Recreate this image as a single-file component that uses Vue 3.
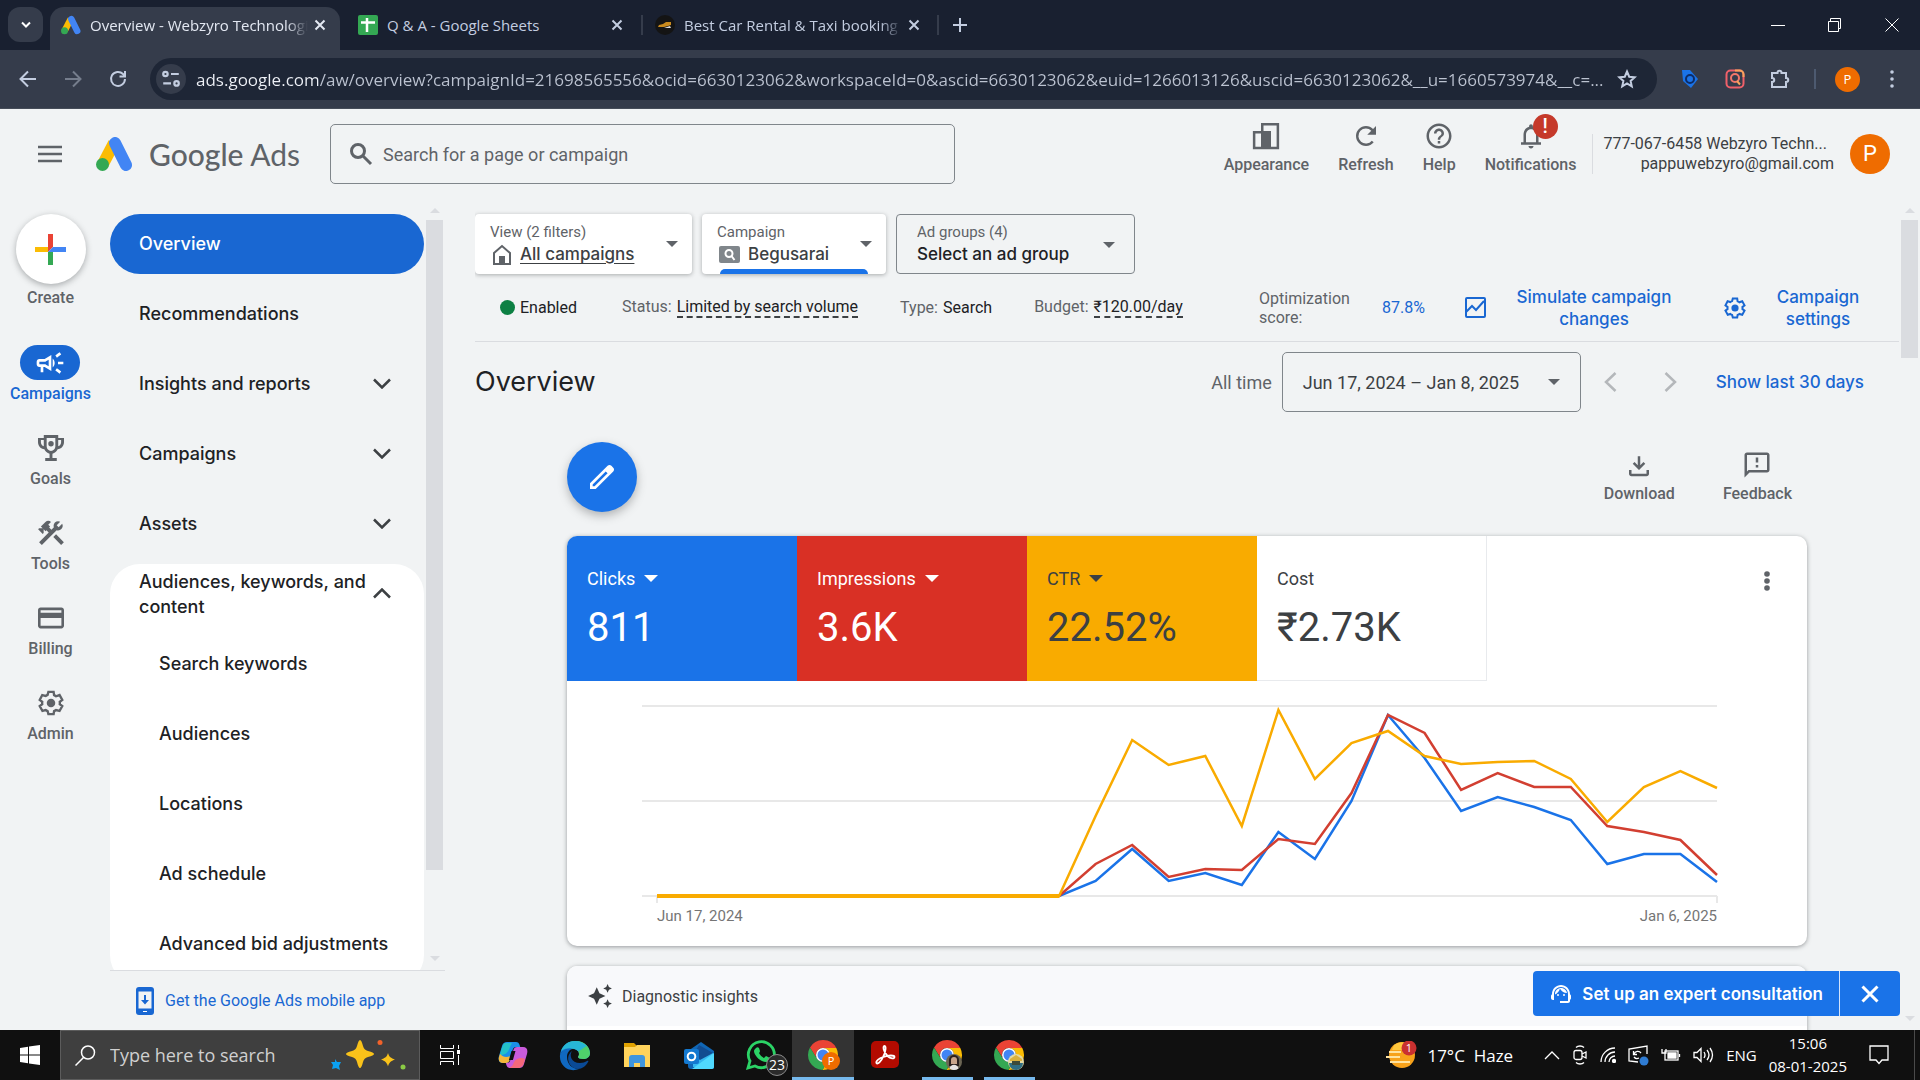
<script setup>
import { ref, computed } from 'vue'

const url = ref('ads.google.com/aw/overview?campaignId=21698565556&ocid=6630123062&workspaceId=0&ascid=6630123062&euid=1266013126&uscid=6630123062&__u=1660573974&__c=...')
const campaign = ref('Begusarai')
const adGroup = ref('Select an ad group')

const gear = '<path fill="none" stroke="currentColor" stroke-width="2" d="M19.43 12.98c.04-.32.07-.64.07-.98 0-.34-.03-.66-.07-.98l2.11-1.65-2.3-4.1-2.94 1.03c-.52-.4-1.08-.73-1.69-.98L14.2 2.6H9.8l-.67 2.47c-.61.25-1.17.59-1.69.98L4.6 5.27l-2.14 4.1 2.11 1.65c-.04.32-.07.65-.07.98 0 .33.03.66.07.98l-2.11 1.65 2.3 4.1 2.68-.78c.52.4 1.08.73 1.69.98l.67 2.47h4.4l.41-2.47c.61-.25 1.17-.59 1.69-.98l2.94.78 2.3-4.1z"/><circle cx="12" cy="12" r="3.6"/>'

const railItems = [
    { label: 'Goals', box: '3 3 18 18', icon: '<path d="M19 5h-2V3H7v2H3v3c0 2.55 1.92 4.63 4.39 4.94.63 1.5 1.98 2.63 3.61 2.96V19H8v2h8v-2h-3v-3.1c1.63-.33 2.98-1.46 3.61-2.96C19.08 12.63 21 10.55 21 8V5h-2zM5 8V6.500h2v4.320C5.840 10.400 5 9.300 5 8zm7 6c-1.650 0-3-1.350-3-3V5h6v6c0 1.650-1.350 3-3 3zm7-6c0 1.300-.84 2.400-2 2.820V6.500h2V8z"/><circle cx="12" cy="9" r="1.900"/>' },
    { label: 'Tools', box: '2 2 20 20', icon: '<path d="M13.78 15.17l2.12-2.12 6 6-2.12 2.12zM17.5 10c1.93 0 3.5-1.57 3.5-3.5 0-.58-.16-1.12-.41-1.6l-2.7 2.7-1.49-1.49 2.7-2.7c-.48-.25-1.02-.41-1.6-.41C15.57 3 14 4.57 14 6.5c0 .41.08.8.21 1.16l-1.85 1.85-1.78-1.78.71-.71-1.41-1.41L12 3.49c-1.17-1.17-3.07-1.17-4.24 0L4.22 7.03l1.41 1.41H2.81l-.71.71 3.54 3.54.71-.71V9.15l1.41 1.41.71-.71 1.78 1.78-7.41 7.41 2.12 2.12L16.34 9.79c.36.13.75.21 1.16.21z"/>' },
    { label: 'Billing', box: '2 2 20 20', icon: '<path d="M20 4H4c-1.11 0-1.99.89-1.99 2L2 18c0 1.11.89 2 2 2h16c1.11 0 2-.89 2-2V6c0-1.11-.89-2-2-2zm0 14H4v-6h16v6zm0-10H4V6h16v2z"/>' },
    { label: 'Admin', box: '1 1 22 22', icon: gear }
]

const navItems = [
    { label: 'Overview', active: true },
    { label: 'Recommendations' },
    { label: 'Insights and reports', expandable: true },
    { label: 'Campaigns', expandable: true },
    { label: 'Assets', expandable: true }
]
const navChildren = ['Search keywords', 'Audiences', 'Locations', 'Ad schedule', 'Advanced bid adjustments']

const headerActions = [
    { label: 'Appearance', icon: '<path fill-rule="evenodd" d="M8 1.500h14.500v21h-21V8H8zM10 3.500h10.500v17H16V8h-6zM3.500 10v10.500H8V10z"/>' },
    { label: 'Refresh', icon: '<path d="M17.65 6.35C16.2 4.9 14.21 4 12 4c-4.42 0-7.99 3.58-7.99 8s3.570 8 7.990 8c2.500 0 4.700-1.150 6.150-2.930l-1.500-1.350A6 6 0 1 1 16.220 7.780L13 11h7V4l-2.350 2.350z"/>' },
    { label: 'Help', icon: '<path d="M11 18h2v-2h-2v2zm1-16C6.48 2 2 6.48 2 12s4.480 10 10 10 10-4.480 10-10S17.520 2 12 2zm0 18c-4.410 0-8-3.590-8-8s3.590-8 8-8 8 3.590 8 8-3.590 8-8 8zm0-14c-2.210 0-4 1.790-4 4h2c0-1.100.9-2 2-2s2 .9 2 2c0 2-3 1.750-3 5h2c0-2.250 3-2.500 3-5 0-2.210-1.790-4-4-4z"/>' },
    { label: 'Notifications', badge: '!', icon: '<path d="M12 22c1.100 0 2-.9 2-2h-4c0 1.100.9 2 2 2zm6-5v-6c0-3.070-1.630-5.640-4.500-6.320V4c0-.83-.67-1.500-1.500-1.500s-1.500.67-1.500 1.500v.68C7.640 5.360 6 7.920 6 11v6H4v2h16v-2h-2zm-2 0H8v-6c0-2.480 1.510-4.500 4-4.500s4 2.020 4 4.500v6z"/>' }
]

const scorecards = [
    { label: 'Clicks', value: '811', theme: 'blue', menu: true },
    { label: 'Impressions', value: '3.6K', theme: 'red', menu: true },
    { label: 'CTR', value: '22.52%', theme: 'yellow', menu: true },
    { label: 'Cost', value: '₹2.73K', theme: 'plain' }
]

// weekly values in chart units, the first 12 weeks had no traffic
const quiet = Array(12).fill(215)
const series = [
    { name: 'Clicks', color: '#1a73e8', y: [...quiet, 200, 168, 200, 192, 204, 151, 178, 120, 34, 77, 130, 116, 126, 139, 183, 173, 173, 201] },
    { name: 'Impressions', color: '#d23f31', y: [...quiet, 183, 164, 196, 188, 189, 158, 163, 112, 34, 52, 109, 92, 106, 106, 145, 151, 159, 194] },
    { name: 'CTR', color: '#f9ab00', y: [...quiet, 135, 59, 84, 75, 145, 29, 98, 62, 50, 75, 83, 81, 80, 98, 141, 106, 90, 107] }
]
const lines = computed(() => series.map(s => ({
    ...s,
    points: s.y.map((y, i) => `${(90 + i * 1060 / 29).toFixed(1)},${y}`).join(' ')
})))

const chrome = '<path fill="#ea4335" d="M16 9H29.300A15 15 0 0 0 3 8.500L9.900 19.500A7 7 0 0 1 16 9Z"/><path fill="#fbbc04" d="M29.300 9H16A7 7 0 0 1 22 19.500L15.500 31A15 15 0 0 0 29.300 9Z"/><path fill="#34a853" d="M3 8.500L9.900 19.500A7 7 0 0 0 22 19.500L15.500 31A15 15 0 0 1 3 8.500Z"/><circle cx="16" cy="16" r="7" fill="#fff"/><circle cx="16" cy="16" r="5.500" fill="#4285f4"/>'

const apps = [
    { name: 'Copilot', icon: '<path fill="#1b8fe8" d="M10 3h9c2 0 3 1 3.600 3l.6 2h-4c-2 0-3 1-3.600 3l-3 10c-.6 2-1.600 3-3.600 3H6c-4 0-5-3-4-7L5 7c1-3 2.500-4 5-4z"/><path fill="#23c0c8" d="M8 4c-2 1-3 4-4 8l-1 4c4 0 8-1 10-8l2-4z"/><path fill="#f5b63a" d="M3 15l-1 3c-1 4 1 6 4 6h3c2 0 3-1 3.600-3l1-4C9 19 6 18 3 15z"/><path fill="#c95bdb" d="M22 29h-9c-2 0-3-1-3.600-3l-.6-2h1c2 0 3-1 3.600-3l3-10c.6-2 1.600-3 3.600-3h6c4 0 5 3 4 7l-3 10c-1 3-2.500 4-5 4z"/><path fill="#f4687a" d="M24 28c2-1 3-4 4-8-3-2-9-1-11 3-1 3-2 5-5 6h10z"/><path fill="#101010" d="M14.500 12h4l-2.600 9h-4z"/>' },
    { name: 'Edge', icon: '<path fill="#1478d4" d="M1 16C2 8 8 2 16 2c9 0 15 6 15 12 0 4-3 6-7 6-3 0-5-1-5-2 0-1 1-1 1-3 0-3-3-5-7-5-7 0-11 3-12 6z"/><path fill="#4fd06b" d="M11 3c12-4 20 4 20 11 0 4-3 6-7 6-3 0-5-1-5-2 0-1 1-1 1-3 0-5-5-6-12-6-2 0-3 0-4 1 1-3 4-6 7-7z"/><path fill="#27b6d6" d="M2 12C4 6 9 2 16 2c5 0 9 2 12 5-5 2-6 5-9 5-3-3-11-4-17 0z"/><path fill="#1068c0" d="M1 16c1-4 6-7 12-6-3 1-5 4-5 8 0 7 5 12 12 12-10 4-20-3-19-14z"/><path fill="#0a4a96" d="M13 12c-3 4-1 12 8 12 3 0 5-1 7-2 1-.5 2 0 1 1-2 4-6 7-10 7C9 29 6 17 13 12z"/>' },
    { name: 'File Explorer', icon: '<path fill="#e0a100" d="M3 4h10l3 3v6H3z"/><path fill="#ffd35c" d="M3 8h11l2-2h13v22H3z"/><path fill="#3f95dd" d="M8 19c0-2 1-3 3-3h10c2 0 3 1 3 3v9h-5v-4h-6v4H8z"/>' },
    { name: 'Outlook', icon: '<path fill="#1066b5" d="M5 12L18 3l13 9v16c0 1-1 2-2 2H8c-2 0-3-1-3-3z"/><path fill="#35b8f1" d="M10 14h20v14H10z"/><path fill="#124c91" d="M16 6l14 8-13 7-7-5z"/><path fill="#50d9ff" d="M31 14v14c0 1-1 2-2 2H9z"/><rect x="1" y="10" width="15" height="15" rx="2" fill="#1479d0"/><circle cx="8.500" cy="17.500" r="3.800" fill="none" stroke="#fff" stroke-width="2"/>' },
    { name: 'WhatsApp', count: 23, icon: '<path fill="none" stroke="#2bd366" stroke-width="2.800" d="M3 29l2-7A13 13 0 1 1 10 27z"/><path fill="#2bd366" d="M11 9c1-1 2-1 3 0l1 3c0 1-1 2-1 2 1 2 3 4 5 5l2-2 4 2c0 2-1 4-4 4-6 0-12-7-12-11 0-1 1-2 2-3z"/>' },
    { name: 'Chrome', state: 'active', profile: 'P', icon: chrome },
    { name: 'Acrobat', icon: '<rect x="2" y="2" width="28" height="27" rx="5" fill="#b30b00"/><path fill="none" stroke="#fff" stroke-width="1.800" d="M15.500 7c-2 0-1 6 3 10 3 3 7 3 7 1s-6-2-11 0c-4 1-8 4-7 6s5-2 7-7c2-4 3-10 1-10z"/>' },
    { name: 'Chrome profile 2', state: 'open', icon: chrome + '<circle cx="23" cy="23" r="8" fill="#6c6654"/><path fill="#2b211e" d="M18 27v-6a5 5 0 0 1 10 0v6z"/><path fill="#c9a58b" d="M20 21a3 3 0 0 1 6 0v4h-6z"/><path fill="#e8e4e2" d="M18.500 29.500c1-5 8-5 9 0a8 8 0 0 1-9 0z"/>' },
    { name: 'Chrome profile 3', state: 'open', icon: chrome + '<circle cx="23" cy="23" r="8" fill="#e4d9a2"/><path fill="#2f6d83" d="M16 24h14a7 7 0 0 1-14 0z"/><path fill="#dbb13c" d="M17 20l6-4 6 4v2H17z"/><path fill="#3d4a3a" d="M19 22h8v4h-8z"/>' }
]
</script>

<template>
    <div class="desktop">
        <div class="tabs">
            <button class="tab_search" aria-label="Search tabs">
                <svg width="12" height="8" viewBox="0 0 12 8"><path d="M2 1.500l4 4 4-4" fill="none" stroke="currentColor" stroke-width="2" /></svg>
            </button>
            <div class="tab tab_active">
                <svg class="fav" viewBox="0 0 37 34"><path d="M18 6L7 27" stroke="#fbbc04" stroke-width="12" /><circle cx="6.500" cy="27.500" r="6.500" fill="#34a853" /><path d="M19 6l11 22" stroke="#4285f4" stroke-width="12" stroke-linecap="round" /></svg>
                <span class="tab_title tab_fade">Overview - Webzyro Technologi</span>
                <button class="tab_close" aria-label="Close tab"><svg viewBox="0 0 12 12"><path d="M1.500 1.500l9 9M10.500 1.500l-9 9" /></svg></button>
            </div>
            <div class="tab">
                <svg class="fav" viewBox="0 0 20 20"><rect width="20" height="20" rx="2" fill="#34a853" /><path d="M3 7.500h14M9 3v14" stroke="#fff" stroke-width="2.500" /></svg>
                <span class="tab_title">Q &amp; A - Google Sheets</span>
                <button class="tab_close" aria-label="Close tab"><svg viewBox="0 0 12 12"><path d="M1.500 1.500l9 9M10.500 1.500l-9 9" /></svg></button>
            </div>
            <div class="tab tab_split">
                <svg class="fav" viewBox="0 0 20 20"><circle cx="10" cy="10" r="10" fill="#141414" /><path d="M3 12l1-2 4-1 3-2h5v3l-3 1-4 1z" fill="#c98a1e" /><path d="M9 13l6-2 1 2z" fill="#ddd" /></svg>
                <span class="tab_title tab_fade">Best Car Rental &amp; Taxi booking</span>
                <button class="tab_close" aria-label="Close tab"><svg viewBox="0 0 12 12"><path d="M1.500 1.500l9 9M10.500 1.500l-9 9" /></svg></button>
            </div>
            <button class="new_tab" aria-label="New tab"><svg width="14" height="14" viewBox="0 0 14 14"><path d="M7 0v14M0 7h14" stroke="currentColor" stroke-width="2" /></svg></button>
            <div class="window_controls">
                <button aria-label="Minimize"><svg width="14" height="14" viewBox="0 0 14 14"><path d="M0 7.500h14" /></svg></button>
                <button aria-label="Restore"><svg width="14" height="14" viewBox="0 0 14 14"><path d="M.5 3.500h10v10h-10zM2.500 3.500v-3h10v10h-2" /></svg></button>
                <button aria-label="Close"><svg width="14" height="14" viewBox="0 0 14 14"><path d="M.5.5l13 13M13.500.5l-13 13" /></svg></button>
            </div>
        </div>

        <div class="toolbar">
            <button aria-label="Back"><svg viewBox="0 0 20 20"><path d="M18 10H3M10 2.500L2.500 10l7.500 7.500" /></svg></button>
            <button aria-label="Forward" disabled><svg viewBox="0 0 20 20"><path d="M2 10h15M10 2.500l7.500 7.500-7.500 7.500" /></svg></button>
            <button aria-label="Reload"><svg viewBox="0 0 20 20"><path d="M17 10a7 7 0 1 1-2-5l2 2M17 2v5.500h-5.500" /></svg></button>
            <div class="omnibox">
                <button class="tune" aria-label="Site information"><svg viewBox="0 0 18 18"><circle cx="4" cy="4.500" r="2" /><path d="M9 4.500h7M2 13h7" /><circle cx="14" cy="13" r="2" /></svg></button>
                <input v-model="url" type="text" aria-label="Address bar">
                <button class="star" aria-label="Bookmark"><svg viewBox="0 0 20 20"><path d="M10 2.500l2.200 5.200 5.600.5-4.200 3.700 1.200 5.500L10 14.500l-4.800 2.900 1.200-5.500-4.200-3.700 5.600-.5z" /></svg></button>
            </div>
            <div class="extensions">
                <svg viewBox="0 0 20 20"><path d="M2 1l8 0 8 9-7 9-8-7z" fill="#1a73e8" stroke="none" /><circle cx="10" cy="10" r="4" stroke="#0d2c66" /></svg>
                <svg viewBox="0 0 20 20"><rect x="1.500" y="1.500" width="17" height="17" rx="4" stroke="#f0606a" /><path d="M18.500 8V5.500a4 4 0 0 0-4-4H10" stroke="#f9a45c" /><circle cx="10" cy="9" r="4" stroke="#f2776a" /><path d="M12 12l3 3.500" stroke="#f9a45c" /></svg>
                <svg viewBox="0 0 20 20"><path d="M2 4h5.500c0-3 4-3 4 0H16v5c3 0 3 4 0 4v5H2v-5c3 0 3-4 0-4z" /></svg>
                <span class="bar"></span>
                <button class="profile" aria-label="Profile">P</button>
                <button aria-label="Menu"><svg viewBox="0 0 20 20"><g fill="currentColor" stroke="none"><circle cx="10" cy="3" r="1.800" /><circle cx="10" cy="10" r="1.800" /><circle cx="10" cy="17" r="1.800" /></g></svg></button>
            </div>
        </div>

        <header class="ads_header">
            <button class="hamburger" aria-label="Main menu"><svg width="24" height="18" viewBox="0 0 24 18"><path d="M0 2h24M0 9h24M0 16h24" stroke="currentColor" stroke-width="2.500" /></svg></button>
            <a class="logo" href="#">
                <svg width="37" height="34" viewBox="0 0 37 34"><path d="M18 6L7 27" stroke="#fbbc04" stroke-width="12" /><circle cx="6.500" cy="27.500" r="6.500" fill="#34a853" /><path d="M19 6l11 22" stroke="#4285f4" stroke-width="12" stroke-linecap="round" /></svg>
                <span><b>Google</b> Ads</span>
            </a>
            <label class="search">
                <svg width="24" height="24" viewBox="0 0 24 24"><circle cx="9" cy="9" r="6.500" /><path d="M14 14l8 8" /></svg>
                <input type="search" placeholder="Search for a page or campaign" aria-label="Search for a page or campaign">
            </label>
            <div class="header_actions">
                <button v-for="a in headerActions" :key="a.label" class="icon_button">
                    <svg width="30" height="30" viewBox="0 0 24 24" v-html="a.icon"></svg>
                    <span>{{ a.label }}</span>
                    <span v-if="a.badge" class="badge">{{ a.badge }}</span>
                </button>
            </div>
            <div class="account">
                <div>
                    <p class="account_name">777-067-6458 Webzyro Techn...</p>
                    <p>pappuwebzyro@gmail.com</p>
                </div>
                <button class="avatar" aria-label="Google account">P</button>
            </div>
        </header>

        <div class="workspace">
            <nav class="rail">
                <button class="create">
                    <span class="create_circle"><svg width="31" height="31" viewBox="0 0 31 31"><path fill="#ea4335" d="M13 0h5v13l-5 5z" /><path fill="#fbbc04" d="M0 13h13v5H0z" /><path fill="#4285f4" d="M18 13h13v5H13z" /><path fill="#34a853" d="M13 18h5v13h-5z" /></svg></span>
                    Create
                </button>
                <a href="#" class="rail_item rail_active">
                    <span class="rail_icon"><svg width="32" height="32" viewBox="0 0 24 24"><path d="M18 11v2h4v-2h-4zM16 17.610c.96.71 2.210 1.650 3.200 2.390.4-.53.8-1.070 1.200-1.600-.99-.74-2.240-1.680-3.200-2.400-.4.54-.8 1.080-1.200 1.610zM20.400 5.600c-.4-.53-.8-1.070-1.200-1.600-.99.74-2.240 1.680-3.200 2.400.4.53.8 1.070 1.200 1.600.96-.72 2.210-1.650 3.200-2.400zM4 9c-1.100 0-2 .9-2 2v2c0 1.100.9 2 2 2h1v4h2v-4h1l5 3V6L8 9H4zm5.030 1.710L11 9.530v4.940l-1.970-1.180-.48-.29H4v-2h4.550l.48-.29zM15.500 12c0-1.330-.58-2.530-1.500-3.350v6.690c.92-.81 1.500-2.010 1.500-3.340z" /></svg></span>
                    Campaigns
                </a>
                <a v-for="item in railItems" :key="item.label" href="#" class="rail_item">
                    <span class="rail_icon"><svg width="26" height="26" :viewBox="item.box" v-html="item.icon"></svg></span>
                    {{ item.label }}
                </a>
            </nav>

            <div class="side">
                <div class="side_scroll">
                    <nav class="menu">
                        <a v-for="item in navItems" :key="item.label" href="#" class="menu_item" :class="{ menu_active: item.active }">
                            {{ item.label }}
                            <svg v-if="item.expandable" width="18" height="11" viewBox="0 0 18 11"><path d="M1 1.500l8 8 8-8" /></svg>
                        </a>
                        <div class="menu_group">
                            <a href="#" class="menu_item">
                                Audiences, keywords, and content
                                <svg width="18" height="11" viewBox="0 0 18 11"><path d="M1 9.500l8-8 8 8" /></svg>
                            </a>
                            <a v-for="child in navChildren" :key="child" href="#" class="menu_item menu_child">{{ child }}</a>
                        </div>
                    </nav>
                    <div class="scrollbar" aria-hidden="true"><i class="up"></i><b></b><i class="down"></i></div>
                </div>
                <a href="#" class="mobile_app">
                    <svg width="18" height="28" viewBox="0 0 18 28"><rect width="18" height="28" rx="3" fill="#1967d2" /><path d="M2.500 4.500h13v17h-13z" fill="#f1f3f4" /><path d="M8 8h2v5h3l-4 4.500L5 13h3z" fill="#1967d2" /><path d="M7 24.500h4" stroke="#fff" /></svg>
                    Get the Google Ads mobile app
                </a>
            </div>

            <main class="main">
                <div class="content">
                    <div class="pickers">
                        <button class="picker picker_view">
                            <span class="picker_label">View (2 filters)</span>
                            <span class="picker_value">
                                <svg width="20" height="21" viewBox="0 0 20 21"><path d="M2 9l8-7 8 7v11H2z" fill="none" stroke="#5f6368" stroke-width="2" /><path d="M7 12h6v8H7z" fill="#5f6368" /></svg>
                                <u>All campaigns</u>
                            </span>
                            <i class="caret"></i>
                        </button>
                        <label class="picker picker_campaign">
                            <span class="picker_label">Campaign</span>
                            <span class="picker_value">
                                <svg width="21" height="17" viewBox="0 0 21 17"><rect width="21" height="17" rx="2" fill="#80868b" /><circle cx="10" cy="7.500" r="3.500" fill="none" stroke="#fff" stroke-width="2" /><path d="M12.500 10l3 4" stroke="#fff" stroke-width="2" /></svg>
                                <select v-model="campaign"><option>Begusarai</option></select>
                            </span>
                            <i class="caret"></i>
                        </label>
                        <label class="picker picker_group">
                            <span class="picker_label">Ad groups (4)</span>
                            <span class="picker_value"><select v-model="adGroup"><option>Select an ad group</option></select></span>
                            <i class="caret"></i>
                        </label>
                    </div>

                    <div class="status">
                        <span class="enabled">Enabled</span>
                        <span class="pair"><em>Status:</em><span class="dashed">Limited by search volume</span></span>
                        <span class="pair"><em>Type:</em>Search</span>
                        <span class="pair"><em>Budget:</em><span class="dashed">₹120.00/day</span></span>
                        <div class="status_right">
                            <em class="score">Optimization score:</em>
                            <a href="#">87.8%</a>
                            <button class="text_link simulate">
                                <svg width="21" height="21" viewBox="0 0 21 21"><rect x="1" y="1" width="19" height="19" rx="1" fill="none" stroke="currentColor" stroke-width="2" /><path d="M1 15l6-6 4 4 8-9" fill="none" stroke="currentColor" stroke-width="2" /></svg>
                                <span>Simulate campaign changes</span>
                            </button>
                            <button class="text_link settings">
                                <svg width="22" height="22" viewBox="1 1 22 22" v-html="gear"></svg>
                                <span>Campaign settings</span>
                            </button>
                        </div>
                    </div>

                    <div class="title_row">
                        <h1>Overview</h1>
                        <span class="all_time">All time</span>
                        <button class="date_range">Jun 17, 2024 – Jan 8, 2025<i class="caret"></i></button>
                        <button class="step" aria-label="Previous period"><svg width="13" height="20" viewBox="0 0 13 20"><path d="M11.500 1L2 10l9.500 9" /></svg></button>
                        <button class="step" aria-label="Next period"><svg width="13" height="20" viewBox="0 0 13 20"><path d="M1.500 1L11 10l-9.500 9" /></svg></button>
                        <button class="text_link last_days">Show last 30 days</button>
                    </div>

                    <div class="board">
                        <div class="board_tools">
                            <button class="edit" aria-label="Edit"><svg width="32" height="32" viewBox="0 0 24 24"><path d="M5 19h1.425L16.200 9.225 14.775 7.800 5 17.575V19zm-2 2v-4.250L16.200 3.575q.3-.275.663-.425.362-.15.762-.15t.775.15q.375.15.65.45L20.425 5q.3.275.437.65.138.375.138.75 0 .4-.138.763-.137.362-.437.662L7.250 21z" /></svg></button>
                            <button class="icon_button download">
                                <svg width="30" height="30" viewBox="0 0 24 24"><path d="M18 16v3H6v-3H4v3c0 1.100.9 2 2 2h12c1.100 0 2-.9 2-2v-3h-2zm-1-5l-1.410-1.410L13 12.170V5h-2v7.170L8.410 9.590 7 11l5 5 5-5z" /></svg>
                                <span>Download</span>
                            </button>
                            <button class="icon_button feedback">
                                <svg width="30" height="30" viewBox="0 0 24 24"><path d="M20 2H4c-1.100 0-1.990.9-1.990 2L2 22l4-4h14c1.100 0 2-.9 2-2V4c0-1.100-.9-2-2-2zm0 14H5.170L4 17.170V4h16v12zm-9-4h2v2h-2zm0-6h2v4h-2z" /></svg>
                                <span>Feedback</span>
                            </button>
                        </div>

                        <section class="card">
                            <div class="scores">
                                <button v-for="s in scorecards" :key="s.label" class="scorecard" :class="s.theme">
                                    <span class="score_label">{{ s.label }}<i v-if="s.menu" class="caret"></i></span>
                                    <span class="score_value">{{ s.value }}</span>
                                </button>
                                <button class="more" aria-label="More options"><svg width="6" height="20" viewBox="0 0 6 20"><circle cx="3" cy="3" r="2.800" /><circle cx="3" cy="10" r="2.800" /><circle cx="3" cy="17" r="2.800" /></svg></button>
                            </div>
                            <svg class="chart" viewBox="0 0 1240 265" role="img" aria-label="Performance chart">
                                <g stroke="#e8e8e8" stroke-width="2">
                                    <path d="M75 25H1150M75 120H1150M75 215H1150M90 215v7M1150 215v7" />
                                </g>
                                <polyline v-for="l in lines" :key="l.name" :points="l.points" fill="none" :stroke="l.color" stroke-width="2.500" />
                                <path d="M90 215h402" stroke="#f9ab00" stroke-width="4" />
                                <text x="90" y="240">Jun 17, 2024</text>
                                <text x="1150" y="240" text-anchor="end">Jan 6, 2025</text>
                            </svg>
                        </section>

                        <section class="card insights">
                            <h2>
                                <svg width="26" height="26" viewBox="0 0 24 24"><path d="M19 9l1.250-2.750L23 5l-2.750-1.250L19 1l-1.250 2.750L15 5l2.750 1.250L19 9zm-7.500.5L9 4 6.500 9.500 1 12l5.500 2.500L9 20l2.500-5.500L17 12l-5.500-2.500zM19 15l-1.250 2.750L15 19l2.750 1.250L19 23l1.250-2.750L23 19l-2.750-1.250L19 15z" /></svg>
                                Diagnostic insights
                            </h2>
                        </section>
                    </div>
                </div>
                <div class="scrollbar main_scrollbar" aria-hidden="true"><i class="up"></i><b></b><i class="down"></i></div>
                <div class="consult">
                    <button class="consult_main">
                        <svg width="24" height="24" viewBox="0 0 24 24"><path d="M21 12.220C21 6.730 16.740 3 12 3c-4.690 0-9 3.650-9 9.280-.6.34-1 .98-1 1.720v2c0 1.100.9 2 2 2h1v-6.100c0-3.870 3.130-7 7-7s7 3.130 7 7V19h-8v2h8c1.100 0 2-.9 2-2v-1.220c.59-.31 1-.92 1-1.640v-2.300c0-.7-.41-1.310-1-1.620z" /><circle cx="9" cy="13" r="1" /><circle cx="15" cy="13" r="1" /><path d="M18 11.030C17.520 8.180 15.040 6 12.050 6c-3.030 0-6.290 2.510-6.030 6.450 2.470-1.010 4.330-3.210 4.860-5.890 1.310 2.630 4 4.440 7.120 4.470z" /></svg>
                        Set up an expert consultation
                    </button>
                    <button class="consult_close" aria-label="Dismiss"><svg width="18" height="18" viewBox="0 0 18 18"><path d="M1.500 1.500l15 15M16.500 1.500l-15 15" stroke="#fff" stroke-width="3" /></svg></button>
                </div>
            </main>
        </div>

        <footer class="taskbar">
            <button class="start" aria-label="Start"><svg width="20" height="20" viewBox="0 0 20 20"><path d="M0 3l8-1.200V9.500H0zM9 1.600L20 0v9.500H9zM0 10.500h8v7.700L0 17zM9 10.500h11V20L9 18.400z" fill="#fff" /></svg></button>
            <label class="task_search">
                <svg width="21" height="21" viewBox="0 0 21 21"><circle cx="13" cy="7.500" r="6.500" /><path d="M8.500 12.500L.5 20.500" /></svg>
                <input type="text" placeholder="Type here to search" aria-label="Type here to search">
                <svg class="sparkles" width="76" height="32" viewBox="0 0 76 32"><path fill="#f9c21a" d="M30 1c1 0 2 2 3 6 1 3 2 4 5 5 4 1 6 2 6 3s-2 2-6 3c-3 1-4 2-5 5-1 4-2 6-3 6s-2-2-3-6c-1-3-2-4-5-5-4-1-6-2-6-3s2-2 6-3c3-1 4-2 5-5 1-4 2-6 3-6zM58 14c1 4 3 5 7 6.500-4 1.500-6 3-7 7-1-4-3-5.500-7-7 4-1.500 6-2.500 7-6.500z" /><path fill="#0aa1f2" d="M5 20l2 3 4 0-2 4 1 4-4-2-4 1 1-4-2-3 4 0z" /><circle cx="50" cy="3.500" r="2.500" fill="#f2622a" /><circle cx="73" cy="28" r="2.500" fill="#8bcb45" /></svg>
            </label>
            <button class="app" aria-label="Task view"><svg width="22" height="20" viewBox="0 0 22 20"><path d="M.5 0v3.500h13V0M.5 20v-3.500h13V20M.5 6.500h13v7H.5zM18.500 0v4M18.500 10v10" fill="none" stroke="#fff" /><path d="M17 5h3v4h-3z" fill="#fff" /></svg></button>
            <button v-for="app in apps" :key="app.name" class="app" :class="app.state" :aria-label="app.name">
                <svg width="32" height="32" viewBox="0 0 32 32" v-html="app.icon"></svg>
                <span v-if="app.count" class="app_count">{{ app.count }}</span>
                <span v-if="app.profile" class="app_profile">{{ app.profile }}</span>
            </button>
            <div class="tray">
                <svg width="32" height="28" viewBox="0 0 32 28"><circle cx="16" cy="14" r="13" fill="#f7a21b" /><path d="M8 4a13 13 0 0 1 16 0v5H6z" fill="#ffc83d" /><path d="M0 16h14M4 21h20M3 11h12" stroke="#ffe3a0" stroke-width="2" /><circle cx="23" cy="7" r="7.500" fill="#c93030" /><text x="23" y="11" fill="#fff" font-size="11" text-anchor="middle">1</text></svg>
                <span class="weather">17°C&nbsp; Haze</span>
                <svg width="16" height="9" viewBox="0 0 16 9"><path d="M1 8l7-7 7 7" /></svg>
                <svg width="16" height="20" viewBox="0 0 16 20"><path d="M4 2.500C6 .5 10 .5 12 2.500M4 17.500c2 2 6 2 8 0" /><rect x="2" y="5.500" width="8" height="9" rx="2" /><path d="M10 9l4-2v6l-4-2" /></svg>
                <svg width="16" height="16" viewBox="0 0 16 16"><path d="M1 15A14 14 0 0 1 15 1M5 15A10 10 0 0 1 15 5M9 15a6 6 0 0 1 6-6" /><circle cx="14" cy="14" r="1.500" fill="#fff" /></svg>
                <svg width="21" height="21" viewBox="0 0 21 21"><path d="M19 9V1L1 4v12l9 1M13 8a4 4 0 0 0-7 1M5.500 6v3.500H9M6 12a4 4 0 0 0 5 1" /><circle cx="16" cy="16" r="4.500" fill="#2f7cd3" stroke="none" /></svg>
                <svg width="20" height="14" viewBox="0 0 20 14"><rect x="4" y="3" width="13" height="9" /><path d="M7 5h8v5H7z" fill="#fff" /><path d="M18.500 6v3M1 1v4h4V1" /></svg>
                <svg width="21" height="16" viewBox="0 0 21 16"><path d="M1 5.500h3l4-4v13l-4-4H1zM11 5q2 3 0 6M14 3q4 5 0 10M17 1q5 7 0 14" /></svg>
                <span class="lang">ENG</span>
                <span class="clock">15:06<br>08-01-2025</span>
                <svg width="20" height="20" viewBox="0 0 20 20"><path d="M1 1h18v14h-6l-3 3.500L7 15H1z" /></svg>
            </div>
        </footer>
    </div>
</template>

<style>
body {
    margin: 0;
    overflow: hidden;
}
</style>

<style scoped>
.desktop {
    display: flex;
    flex-direction: column;
    height: 100vh;
    background: #f1f3f4;
    font-family: Roboto, "Liberation Sans", sans-serif;
    color: #202124;
}

.desktop * {
    box-sizing: border-box;
}

button,
input,
select {
    font: inherit;
    color: inherit;
    background: none;
    border: none;
    padding: 0;
    margin: 0;
    outline: none;
}

button {
    display: flex;
    align-items: center;
    justify-content: center;
    cursor: pointer;
}

a {
    color: #1967d2;
    text-decoration: none;
}

em {
    font-style: normal;
    color: #5f6368;
}

p {
    margin: 0;
}

svg {
    flex: none;
}

/* browser frame */
.tabs {
    display: flex;
    flex: none;
    height: 50px;
    padding: 7px 0 0 8px;
    background: #192030;
    color: #c3cde0;
    font: 15px "Open Sans", "Noto Sans", sans-serif;
}

.tab_search {
    width: 35px;
    height: 35px;
    margin-right: 7px;
    border-radius: 12px;
    background: #353c4b;
    color: #fff;
}

.tab {
    display: flex;
    align-items: center;
    width: 290px;
    height: 36px;
    padding: 0 10px 0 11px;
    margin-right: 7px;
    position: relative;
}

.tab_active {
    height: 43px;
    padding-bottom: 7px;
    background: #353c4b;
    border-radius: 14px 14px 0 0;
    color: #e3e8f2;
}

.tab_split::before,
.tab_split::after {
    content: '';
    position: absolute;
    left: -3px;
    width: 2px;
    height: 20px;
    background: #353c4b;
}

.tab_split::after {
    left: auto;
    right: -5px;
}

.fav {
    width: 20px;
    height: 20px;
    margin-right: 9px;
}

.tab_title {
    flex: 1;
    min-width: 0;
    white-space: nowrap;
}

.tab_fade {
    mask-image: linear-gradient(90deg, #000 90%, transparent);
}

.tab_close {
    width: 20px;
    height: 20px;
    margin-left: 2px;
}

.tab_close svg {
    width: 12px;
    fill: none;
    stroke: currentColor;
    stroke-width: 2;
}

.new_tab {
    width: 28px;
    height: 36px;
    margin-left: 5px;
}

.window_controls {
    display: flex;
    margin-left: auto;
}

.window_controls button {
    width: 57px;
    height: 36px;
    color: #fff;
}

.window_controls svg {
    fill: none;
    stroke: currentColor;
}

.toolbar {
    display: flex;
    flex: none;
    align-items: center;
    height: 59px;
    padding: 0 5px;
    background: #353c4b;
    border-bottom: 1px solid #464d59;
    color: #c3cde0;
    font-family: "Open Sans", "Noto Sans", sans-serif;
}

.toolbar > button {
    width: 45px;
    height: 45px;
}

.toolbar > button:disabled {
    color: #757d8c;
}

.toolbar svg {
    width: 20px;
    height: 20px;
    fill: none;
    stroke: currentColor;
    stroke-width: 2;
}

.omnibox {
    display: flex;
    align-items: center;
    flex: 1;
    height: 42px;
    margin-left: 10px;
    padding: 0 20px 0 6px;
    border-radius: 21px;
    background: #1e2636;
}

.tune {
    width: 30px;
    height: 30px;
    margin-right: 10px;
    border-radius: 50%;
    background: #353c4b;
}

.omnibox input {
    flex: 1;
    min-width: 0;
    height: 30px;
    font-size: 17px;
    /* the host stands out from the rest of the address */
    background: linear-gradient(90deg, #eef1f7 122px, #bcc3d1 122px);
    background-clip: text;
    color: transparent;
}

.extensions {
    display: flex;
    align-items: center;
    gap: 25px;
    padding: 0 13px 0 23px;
}

.extensions button:last-child {
    width: 20px;
    margin-left: -3px;
}

.bar {
    width: 2px;
    height: 20px;
    margin: 0 -6px 0 -1px;
    background: #4d5a70;
}

.profile {
    width: 25px;
    height: 25px;
    border-radius: 50%;
    background: #ef6c00;
    color: #fff;
    font-size: 13px;
}

/* google ads header */
.ads_header {
    display: flex;
    flex: none;
    align-items: center;
    height: 91px;
    padding: 0 30px 1px 38px;
    color: #5f6368;
}

.logo {
    display: flex;
    align-items: center;
    width: 234px;
    margin-left: 34px;
    color: #5f6368;
    font: 30px Lato, Roboto, sans-serif;
}

.logo svg {
    margin-right: 16px;
}

.logo b {
    font-weight: 500;
}

.search {
    display: flex;
    align-items: center;
    width: 625px;
    height: 60px;
    padding: 0 18px;
    border: 1px solid #80868b;
    border-radius: 5px;
    font-size: 18px;
}

.search svg {
    margin-right: 10px;
    fill: none;
    stroke: #5f6368;
    stroke-width: 3;
}

.search input {
    flex: 1;
}

input::placeholder {
    color: #5f6368;
    opacity: 1;
}

.header_actions {
    display: flex;
    gap: 29px;
    margin: 0 0 12px auto;
}

.icon_button {
    flex-direction: column;
    gap: 4px;
    position: relative;
    color: #5f6368;
    font-size: 16px;
    font-weight: 500;
    line-height: 20px;
}

.icon_button svg,
.rail svg,
.edit svg {
    fill: currentColor;
}

.badge {
    position: absolute;
    top: -7px;
    left: 50%;
    width: 25px;
    height: 25px;
    margin-left: 2px;
    border-radius: 50%;
    background: #c5392a;
    color: #fff;
    font-size: 20px;
    line-height: 25px;
    text-align: center;
}

.account {
    display: flex;
    align-items: center;
    height: 40px;
    margin-left: 16px;
    padding-left: 10px;
    border-left: 1px solid #dadce0;
    color: #3c4043;
    font-size: 16px;
    line-height: 20px;
    text-align: right;
}

.account_name {
    padding-right: 7px;
}

.avatar {
    width: 40px;
    height: 40px;
    margin-left: 16px;
    border-radius: 50%;
    background: #ef6c00;
    color: #fff;
    font-size: 22px;
}

/* left rail and navigation */
.workspace {
    display: flex;
    flex: 1;
    min-height: 0;
}

.rail {
    display: flex;
    flex-direction: column;
    align-items: center;
    flex: none;
    width: 101px;
    margin-right: 9px;
    padding-top: 14px;
    font-size: 16px;
    font-weight: 500;
    line-height: 20px;
}

.create {
    flex-direction: column;
    gap: 4px;
    margin-bottom: 37px;
    color: #5f6368;
}

.create_circle {
    display: flex;
    align-items: center;
    justify-content: center;
    width: 70px;
    height: 70px;
    border-radius: 50%;
    background: #fff;
    box-shadow: 0 2px 6px rgba(60, 64, 67, .4);
}

.rail_item {
    display: flex;
    flex-direction: column;
    align-items: center;
    gap: 4px;
    margin-bottom: 26px;
    color: #5f6368;
}

.rail_icon {
    display: flex;
    align-items: center;
    justify-content: center;
    width: 60px;
    height: 35px;
    border-radius: 18px;
}

.rail_active {
    color: #1967d2;
}

.rail_active .rail_icon {
    background: #1967d2;
    color: #fff;
}

.side {
    display: flex;
    flex-direction: column;
    flex: none;
    width: 335px;
}

.side_scroll {
    display: flex;
    flex: 1;
    min-height: 0;
    gap: 2px;
    overflow: hidden;
    border-bottom: 1px solid #dadce0;
}

.menu {
    flex: none;
    width: 314px;
    padding-top: 14px;
}

.menu_item {
    display: flex;
    align-items: center;
    justify-content: space-between;
    height: 60px;
    margin-bottom: 10px;
    padding: 0 33px 1px 29px;
    border-radius: 30px;
    color: #202124;
    font: 500 18px/25px Inter, Roboto, sans-serif;
}

.menu_item svg {
    fill: none;
    stroke: #3c4043;
    stroke-width: 2.5;
}

.menu_active {
    background: #1967d2;
    color: #fff;
}

.menu_group {
    padding-bottom: 1px;
    border-radius: 30px;
    background: #fff;
}

.menu_child {
    padding: 0 0 1px 49px;
}

.scrollbar {
    display: flex;
    flex-direction: column;
    align-items: center;
    width: 17px;
    padding: 8px 0 9px;
}

.scrollbar b {
    flex: 0 0 650px;
    width: 17px;
    margin: 7px 0 auto;
    background: #dadce0;
}

.scrollbar .up,
.scrollbar .down {
    border: 5px solid transparent;
    border-top: 0;
    border-bottom-color: #dadce0;
}

.scrollbar .down {
    border-top: 5px solid #dadce0;
    border-bottom: 0;
}

.mobile_app {
    display: flex;
    align-items: center;
    flex: none;
    gap: 11px;
    height: 59px;
    padding-left: 26px;
    font-size: 16px;
}

/* main area */
.main {
    display: flex;
    flex: 1;
    min-width: 0;
    position: relative;
    padding-left: 30px;
}

.content {
    flex: 1;
    min-width: 0;
    overflow: hidden;
    padding: 14px 0 0;
}

.main_scrollbar {
    margin: 0 2px;
}

.main_scrollbar b {
    flex-basis: 138px;
}

.pickers {
    display: flex;
    gap: 10px;
}

.picker {
    display: flex;
    flex-direction: column;
    align-items: flex-start;
    justify-content: center;
    position: relative;
    height: 60px;
    padding: 0 15px 2px;
    border-radius: 4px;
    background: #fff;
    box-shadow: 0 1px 4px rgba(60, 64, 67, .4);
    line-height: 22px;
}

.picker_view {
    width: 217px;
}

.picker_campaign {
    width: 184px;
}

.picker_campaign::after {
    content: '';
    position: absolute;
    left: 18px;
    right: 18px;
    bottom: 0;
    height: 5px;
    border-radius: 5px 5px 0 0;
    background: #1a73e8;
}

.picker_group {
    width: 239px;
    padding: 0 20px 2px;
    border: 1px solid #80868b;
    background: none;
    box-shadow: none;
}

.picker_label {
    color: #5f6368;
    font-size: 15px;
}

.picker_value {
    display: flex;
    align-items: center;
    gap: 8px;
    padding-left: 2px;
    color: #3c4043;
    font: 500 17px/22px Inter, Roboto, sans-serif;
}

.picker_group .picker_value {
    padding-left: 0;
    color: #202124;
}

.picker select {
    appearance: none;
}

.picker_value u {
    text-underline-offset: 3px;
}

.caret {
    border: 6px solid transparent;
    border-top-color: #5f6368;
    border-bottom: 0;
}

.picker .caret {
    position: absolute;
    top: 27px;
    right: 14px;
}

.picker_group .caret {
    right: 19px;
}

.status {
    display: flex;
    align-items: center;
    height: 68px;
    padding-left: 25px;
    border-bottom: 1px solid #dadce0;
    font-size: 16px;
    white-space: nowrap;
}

.enabled {
    display: flex;
    align-items: center;
    gap: 5px;
    margin-right: 45px;
}

.enabled::before {
    content: '';
    width: 15px;
    height: 15px;
    border-radius: 50%;
    background: #0d8043;
}

.pair {
    display: flex;
    gap: 5px;
    margin-right: 42px;
}

.dashed {
    border-bottom: 2px dashed #3c4043;
}

.status_right {
    display: flex;
    align-items: center;
    margin-left: auto;
    padding-right: 37px;
}

.score {
    width: 95px;
    margin-right: 28px;
    line-height: 19px;
    white-space: normal;
}

.text_link {
    color: #1967d2;
    font: 500 17px/22px Inter, Roboto, sans-serif;
    text-align: center;
}

.simulate,
.settings {
    gap: 28px;
    margin-left: 40px;
    white-space: normal;
}

.simulate span {
    width: 160px;
}

.settings {
    margin-left: 50px;
}

.settings span {
    width: 88px;
}

.settings svg {
    fill: currentColor;
}

.title_row {
    display: flex;
    align-items: center;
    height: 80px;
    padding-right: 35px;
}

h1 {
    margin: 0 auto 0 0;
    font: 400 27px/34px Inter, Roboto, sans-serif;
}

.all_time {
    color: #5f6368;
    font-size: 18px;
}

.date_range {
    justify-content: space-between;
    width: 299px;
    height: 60px;
    margin: 0 23px 0 10px;
    padding: 0 20px;
    border: 1px solid #80868b;
    border-radius: 5px;
    color: #3c4043;
    font-size: 18px;
}

.step {
    width: 13px;
    margin-right: 47px;
}

.step svg {
    fill: none;
    stroke: #b4b7ba;
    stroke-width: 2.5;
}

.last_days {
    margin-left: -8px;
}

.board {
    padding: 20px 92px 0;
}

.board_tools {
    display: flex;
    align-items: center;
    height: 70px;
    margin-bottom: 24px;
    padding-right: 15px;
}

.edit {
    width: 70px;
    height: 70px;
    margin-right: auto;
    border-radius: 50%;
    background: #1a73e8;
    color: #fff;
    box-shadow: 0 4px 10px rgba(60, 64, 67, .35);
}

.download {
    margin-right: 48px;
}

.card {
    overflow: hidden;
    border-radius: 10px;
    background: #fff;
    box-shadow: 0 1px 4px rgba(60, 64, 67, .5);
}

.scores {
    display: flex;
    height: 145px;
}

.scorecard {
    flex-direction: column;
    align-items: flex-start;
    justify-content: flex-start;
    width: 230px;
    padding: 30px 20px 0;
    color: #fff;
}

.score_label {
    display: flex;
    align-items: center;
    gap: 9px;
    font-size: 18px;
    line-height: 25px;
}

.score_value {
    margin-top: 12px;
    font-size: 40px;
    line-height: 50px;
}

.scorecard .caret {
    border-width: 7px 7px 0;
    border-top-color: currentColor;
}

.blue {
    background: #1a73e8;
}

.red {
    background: #d93025;
}

.yellow {
    background: #f9ab00;
    color: #3c4043;
}

.plain {
    border: 1px solid #e8eaed;
    border-width: 0 1px 1px 0;
    color: #3c4043;
}

.more {
    width: 20px;
    height: 30px;
    margin: 30px 30px 0 auto;
}

.more svg {
    fill: #5f6368;
}

.chart {
    display: block;
    width: 100%;
}

.chart text {
    fill: #757575;
    font-size: 15px;
}

.insights {
    height: 180px;
    margin-top: 20px;
}

.insights h2 {
    display: flex;
    align-items: center;
    gap: 9px;
    height: 60px;
    margin: 0;
    padding-left: 20px;
    background: #f8f9fb;
    color: #3c4043;
    font-size: 16px;
    font-weight: 400;
}

.insights svg {
    fill: #3c4043;
}

.consult {
    display: flex;
    position: absolute;
    right: 20px;
    bottom: 14px;
    height: 45px;
    border-radius: 4px;
    background: #1a73e8;
    color: #fff;
    font: 600 17px Inter, Roboto, sans-serif;
}

.consult_main {
    gap: 9px;
    padding: 0 16px;
}

.consult_main svg {
    fill: #fff;
}

.consult_close {
    width: 61px;
    border-left: 1px solid #d2e3fc;
}

/* windows taskbar */
.taskbar {
    display: flex;
    flex: none;
    height: 50px;
    position: relative;
    background: #101010;
    color: #fff;
    font-family: "Open Sans", "Noto Sans", sans-serif;
}

.start {
    width: 60px;
}

.task_search {
    display: flex;
    align-items: center;
    width: 360px;
    padding: 0 13px 0 14px;
    border: 1px solid #5c5c5c;
    background: #3f3f3f;
    font-size: 18px;
}

.task_search svg {
    fill: none;
    stroke: #fff;
    stroke-width: 1.5;
}

.task_search .sparkles {
    stroke: none;
}

.task_search input {
    flex: 1;
    min-width: 0;
    margin-left: 14px;
}

.task_search input::placeholder {
    color: #d0d0d0;
}

.app {
    position: relative;
    width: 62px;
}

.active {
    background: #333;
    border-bottom: 3px solid #76b9ed;
    padding-top: 3px;
}

.open::after {
    content: '';
    position: absolute;
    left: 6px;
    right: 5px;
    bottom: 0;
    height: 3px;
    background: #76b9ed;
}

.app_count,
.app_profile {
    position: absolute;
    left: 36px;
    top: 24px;
    width: 22px;
    height: 22px;
    border: 1px solid #8a8a8a;
    border-radius: 50%;
    background: #2b2b2b;
    font-size: 14px;
    line-height: 20px;
    text-align: center;
}

.app_profile {
    left: 30px;
    top: 22px;
    width: 18px;
    height: 18px;
    border: 0;
    background: #ef6c00;
    font-size: 11px;
    line-height: 18px;
}

.tray {
    display: flex;
    align-items: center;
    gap: 12px;
    margin-left: auto;
    padding-right: 31px;
    font-size: 16px;
}

.tray svg {
    fill: none;
    stroke: #fff;
    stroke-width: 1.3;
}

.tray svg:first-child {
    margin-right: -3px;
    stroke: none;
}

.weather {
    margin-right: 19px;
    font-size: 17px;
}

.lang {
    font-size: 15px;
}

.clock {
    margin-right: 10px;
    font-size: 15px;
    line-height: 23px;
    text-align: center;
}

.taskbar::after {
    content: '';
    position: absolute;
    right: 5px;
    width: 1px;
    height: 50px;
    background: #4a4a4a;
}
</style>
